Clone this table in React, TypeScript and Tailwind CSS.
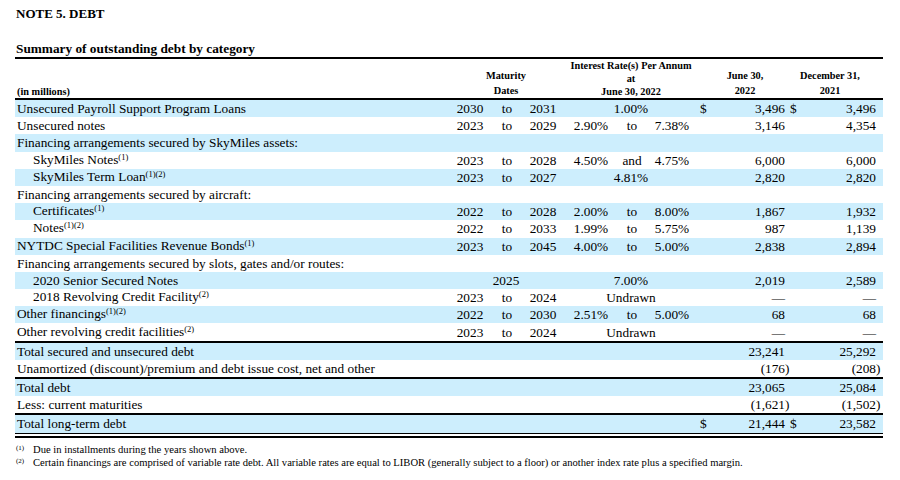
import React from "react";

type Row = {
  label: string;
  sup?: string;
  indent?: boolean;
  mFrom?: string;
  mTo?: string;
  mSingle?: string;
  rLo?: string;
  rMid?: string;
  rHi?: string;
  rSingle?: string;
  d1?: boolean;
  june?: string;
  d2?: boolean;
  dec?: string;
};

const rows: Row[] = [
  { label: "Unsecured Payroll Support Program Loans", mFrom: "2030", mTo: "2031", rSingle: "1.00%", d1: true, june: "3,496", d2: true, dec: "3,496" },
  { label: "Unsecured notes", mFrom: "2023", mTo: "2029", rLo: "2.90%", rMid: "to", rHi: "7.38%", june: "3,146", dec: "4,354" },
  { label: "Financing arrangements secured by SkyMiles assets:" },
  { label: "SkyMiles Notes", sup: "(1)", indent: true, mFrom: "2023", mTo: "2028", rLo: "4.50%", rMid: "and", rHi: "4.75%", june: "6,000", dec: "6,000" },
  { label: "SkyMiles Term Loan", sup: "(1)(2)", indent: true, mFrom: "2023", mTo: "2027", rSingle: "4.81%", june: "2,820", dec: "2,820" },
  { label: "Financing arrangements secured by aircraft:" },
  { label: "Certificates", sup: "(1)", indent: true, mFrom: "2022", mTo: "2028", rLo: "2.00%", rMid: "to", rHi: "8.00%", june: "1,867", dec: "1,932" },
  { label: "Notes", sup: "(1)(2)", indent: true, mFrom: "2022", mTo: "2033", rLo: "1.99%", rMid: "to", rHi: "5.75%", june: "987", dec: "1,139" },
  { label: "NYTDC Special Facilities Revenue Bonds", sup: "(1)", mFrom: "2023", mTo: "2045", rLo: "4.00%", rMid: "to", rHi: "5.00%", june: "2,838", dec: "2,894" },
  { label: "Financing arrangements secured by slots, gates and/or routes:" },
  { label: "2020 Senior Secured Notes", indent: true, mSingle: "2025", rSingle: "7.00%", june: "2,019", dec: "2,589" },
  { label: "2018 Revolving Credit Facility", sup: "(2)", indent: true, mFrom: "2023", mTo: "2024", rSingle: "Undrawn", june: "—", dec: "—" },
  { label: "Other financings", sup: "(1)(2)", mFrom: "2022", mTo: "2030", rLo: "2.51%", rMid: "to", rHi: "5.00%", june: "68", dec: "68" },
  { label: "Other revolving credit facilities", sup: "(2)", mFrom: "2023", mTo: "2024", rSingle: "Undrawn", june: "—", dec: "—" },
];

const totals1: Row[] = [
  { label: "Total secured and unsecured debt", june: "23,241", dec: "25,292" },
  { label: "Unamortized (discount)/premium and debt issue cost, net and other", june: "(176)", dec: "(208)" },
];
const totals2: Row[] = [
  { label: "Total debt", june: "23,065", dec: "25,084" },
  { label: "Less: current maturities", june: "(1,621)", dec: "(1,502)" },
];
const totals3: Row[] = [
  { label: "Total long-term debt", d1: true, june: "21,444", d2: true, dec: "23,582" },
];

function split(v?: string): [string, string] {
  if (!v) return ["", ""];
  if (v.startsWith("(") && v.endsWith(")")) return [v.slice(0, -1), ")"];
  return [v, ""];
}

function DataRow({ r, blue }: { r: Row; blue: boolean }) {
  const [jv, jp] = split(r.june);
  const [dv, dp] = split(r.dec);
  return (
    <div className={`flex h-[17.2px] items-center leading-[17px] whitespace-nowrap ${blue ? "bg-[#cdeefd]" : "bg-white"}`}>
      <div className={`w-[435px] ${r.indent ? "pl-[18px]" : "pl-[2px]"}`}>
        {r.label}
        {r.sup && <span className="relative -top-[4px] text-[8.5px]">{r.sup}</span>}
      </div>
      {r.mSingle ? (
        <div className="w-[112px] text-center">{r.mSingle}</div>
      ) : (
        <>
          <div className="w-[40px] text-center">{r.mFrom}</div>
          <div className="w-[34px] text-center">{r.mFrom ? "to" : ""}</div>
          <div className="w-[38px] text-center">{r.mTo}</div>
        </>
      )}
      {r.rSingle ? (
        <div className="w-[138px] text-center">{r.rSingle}</div>
      ) : (
        <>
          <div className="w-[58px] text-center">{r.rLo}</div>
          <div className="w-[24px] text-center">{r.rMid}</div>
          <div className="w-[56px] text-center">{r.rHi}</div>
        </>
      )}
      <div className="w-[10px]">{r.d1 ? "$" : ""}</div>
      <div className="w-[75px] text-right">{jv}</div>
      <div className="w-[5px]">{jp}</div>
      <div className="w-[10px]">{r.d2 ? "$" : ""}</div>
      <div className="w-[76px] text-right">{dv}</div>
      <div className="w-[7px]">{dp}</div>
    </div>
  );
}

export default function App() {
  return (
    <div
      className="w-[900px] h-[480px] bg-white text-black overflow-hidden"
      style={{ fontFamily: "'Liberation Serif', 'Times New Roman', serif" }}
    >
      <div className="pt-[6px] pl-[16px] text-[13px] leading-[16px] font-bold">NOTE 5. DEBT</div>
      <div className="mt-[19px] ml-[15px] w-[868px]">
        <div className="pl-[1px] text-[13.3px] leading-[16px] font-bold">Summary of outstanding debt by category</div>
        <div className="h-[2px] bg-black" />
        <div className="flex h-[39px] items-end text-[10.3px] font-bold whitespace-nowrap">
          <div className="w-[435px] pl-[2px] leading-[13px]">(in millions)</div>
          <div className="w-[112px] text-center leading-[15px]">
            Maturity
            <br />
            Dates
          </div>
          <div className="w-[138px] text-center leading-[13px]">
            Interest Rate(s) Per Annum
            <br />
            at
            <br />
            June 30, 2022
          </div>
          <div className="w-[90px] text-center leading-[15px]">
            June 30,
            <br />
            2022
          </div>
          <div className="w-[80px] text-center leading-[15px]">
            December 31,
            <br />
            2021
          </div>
        </div>
        <div className="h-[2px] bg-black" />
        <div className="text-[13.3px]">
          {rows.map((r, i) => (
            <DataRow key={i} r={r} blue={i % 2 === 0} />
          ))}
          <div className="h-[2px] bg-black" />
          {totals1.map((r, i) => (
            <DataRow key={i} r={r} blue={i % 2 === 0} />
          ))}
          <div className="h-[2px] bg-black" />
          {totals2.map((r, i) => (
            <DataRow key={i} r={r} blue={i % 2 === 0} />
          ))}
          <div className="h-[2px] bg-black" />
          {totals3.map((r, i) => (
            <DataRow key={i} r={r} blue={i % 2 === 0} />
          ))}
          <div className="h-[1.5px] bg-black" />
          <div className="h-[2px]" />
          <div className="h-[1.5px] bg-black" />
        </div>
      </div>
      <div className="mt-[5px] pl-[16px] text-[10.6px] leading-[13px]">
        <div className="flex">
          <div className="w-[17px] text-[7px] leading-[10px]">(1)</div>
          <div>Due in installments during the years shown above.</div>
        </div>
        <div className="flex">
          <div className="w-[17px] text-[7px] leading-[10px]">(2)</div>
          <div>
            Certain financings are comprised of variable rate debt. All variable rates are equal to LIBOR (generally subject to a floor) or another index rate plus a specified margin.
          </div>
        </div>
      </div>
    </div>
  );
}
